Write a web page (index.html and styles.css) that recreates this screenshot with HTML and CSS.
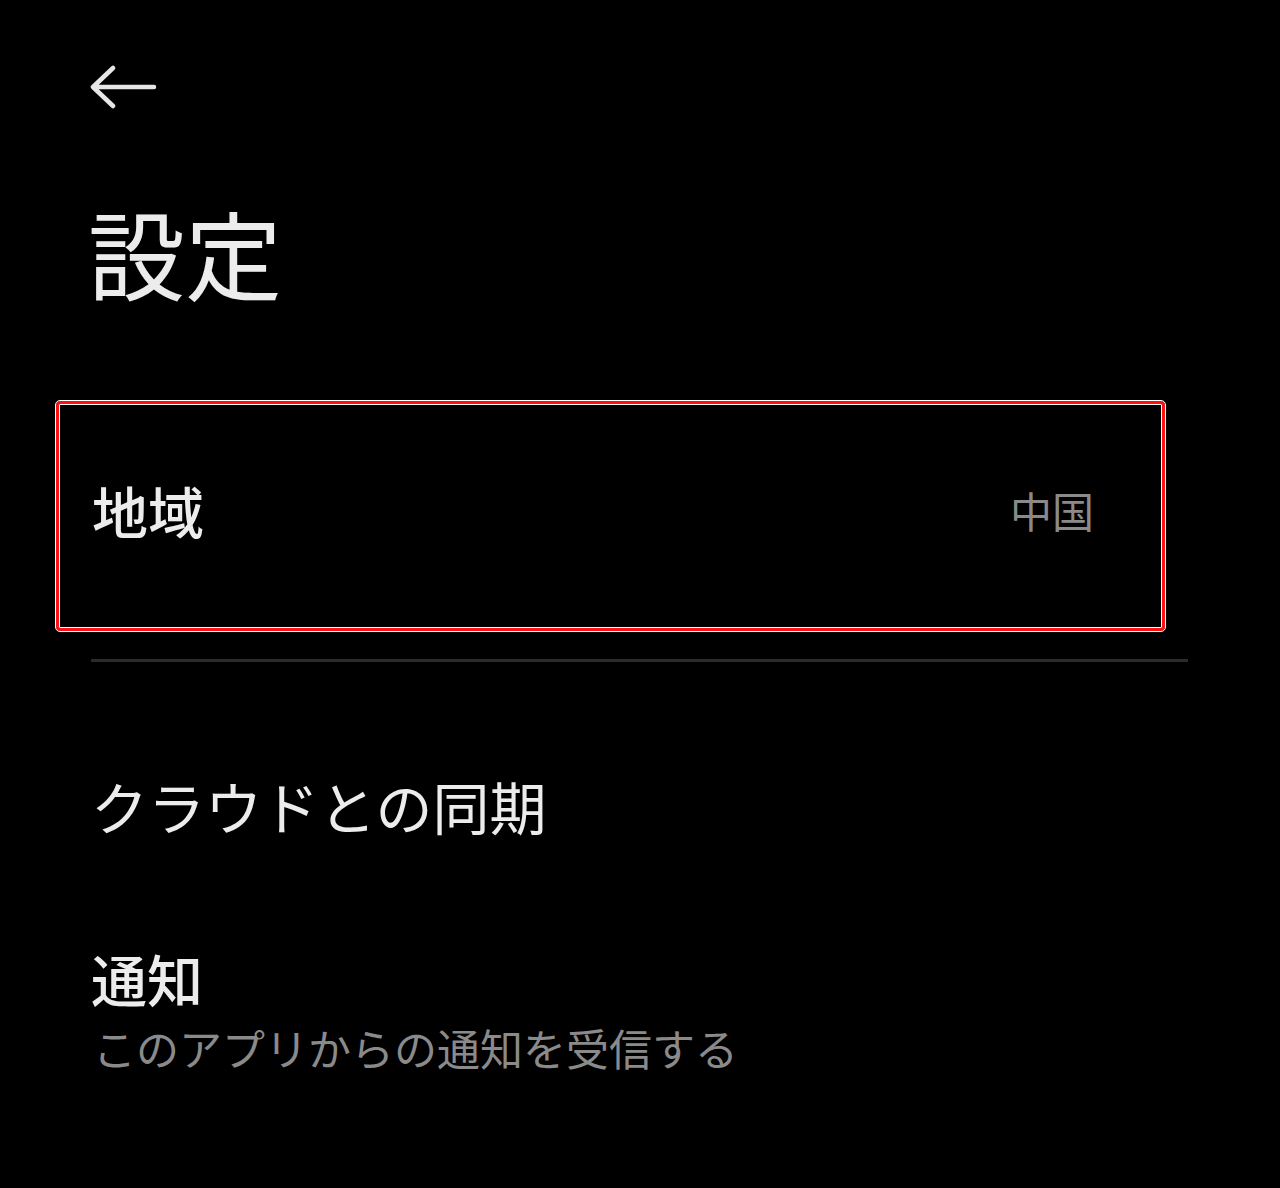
FILE: index.html
```html
<!DOCTYPE html>
<html lang="ja">
<head>
  <meta charset="UTF-8">
  <title>設定</title>
  <link rel="stylesheet" href="styles.css">
</head>
<body>
<div class="page">
  <!-- 戻る -->
  <div class="top-bar">
    <svg class="back" width="68" height="48" viewBox="0 0 68 48">
      <path d="M3 22 H64 M3 22 L23 3 M3 22 L23 41" fill="none" stroke="#e6e6e6" stroke-width="4.5" stroke-linecap="round" stroke-linejoin="round"/>
    </svg>
  </div>

  <h1 class="title">設定</h1>

  <div class="row row-region">
    <span class="row-label">地域</span>
    <span class="row-value">中国</span>
  </div>

  <div class="divider"></div>

  <div class="row row-plain">
    <span class="row-label light">クラウドとの同期</span>
  </div>

  <div class="row row-sub">
    <span class="row-label">通知</span>
    <span class="row-desc">このアプリからの通知を受信する</span>
  </div>
</div>
</body>
</html>
```

FILE: styles.css
```css
html, body {
  margin: 0;
  background-color: #000;
}

body {
  font-family: "Noto Sans CJK JP", "Noto Sans", sans-serif;
  color: #ececec;
}

.page {
  padding: 0 92px 0 91px;
  height: 1188px;
  box-sizing: border-box;
}

.top-bar {
  height: 140px;
  display: flex;
  align-items: flex-start;
  padding-top: 65px;
  box-sizing: border-box;
}

.back {
  display: block;
  margin-left: -1px;
}

.title {
  margin: -4px 0 0 -3px;
  font-size: 97px;
  font-weight: 400;
  line-height: 230px;
  height: 265px;
}

/* 行 */
.row {
  display: flex;
  align-items: center;
}

.row-region {
  height: 230px;
  box-sizing: border-box;
  margin: 0 23px 0 -35px;
  padding: 0 68px 12px 33px;
  justify-content: space-between;
  border: 3px solid #ff1010;
  border-radius: 4px;
  outline: 1px solid #fff;
  box-shadow: inset 0 0 0 1px #fff;
}

.row-label {
  font-size: 56px;
  font-weight: 500;
  line-height: 1;
}

.row-label.light {
  font-size: 57px;
  font-weight: 400;
}

.row-value {
  font-size: 42px;
  color: #8a8a8a;
  line-height: 1;
}

.divider {
  height: 3px;
  background-color: #2b2b2b;
  margin-top: 28px;
}

.row-plain {
  height: 288px;
  padding-bottom: 2px;
  box-sizing: border-box;
}

.row-sub {
  flex-direction: column;
  align-items: flex-start;
}

.row-desc {
  font-size: 43px;
  color: #8a8a8a;
  margin-top: 20px;
  line-height: 1;
  padding-left: 2px;
}
```
